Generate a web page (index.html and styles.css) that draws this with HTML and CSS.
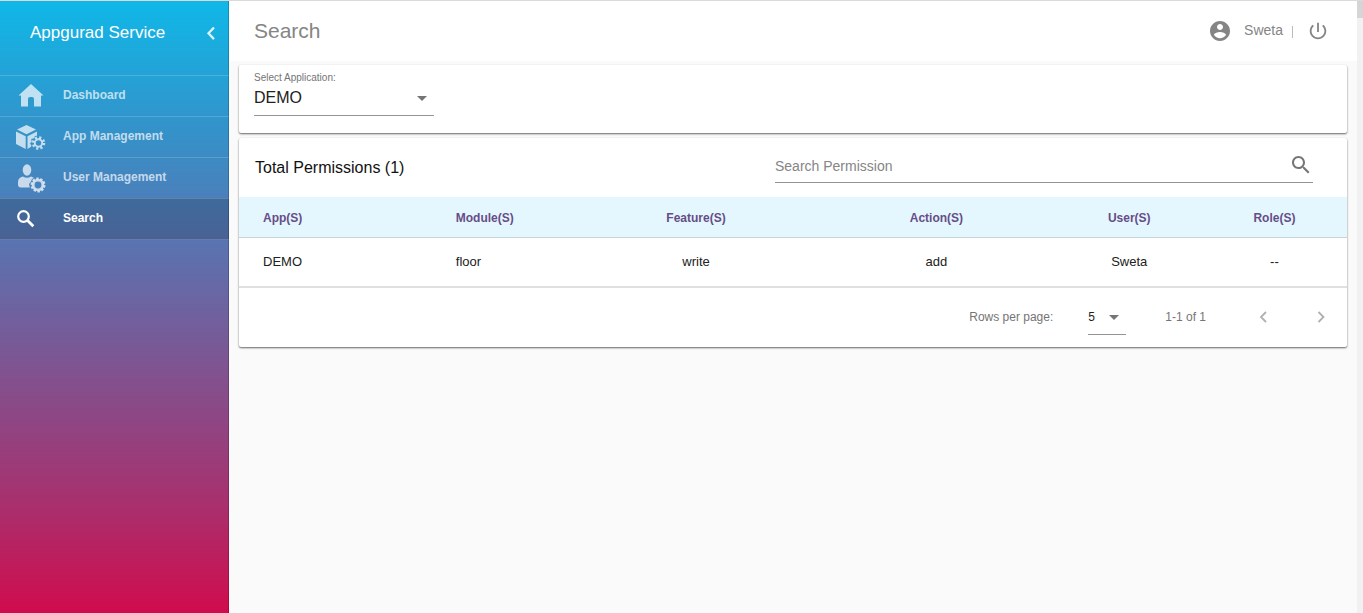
FILE: index.html
```html
<!DOCTYPE html>
<html lang="en">
<head>
<meta charset="utf-8">
<meta name="viewport" content="width=device-width, initial-scale=1">
<title>Appgurad Service - Search</title>
<link rel="stylesheet" href="styles.css">
</head>
<body>
<div class="app">
  <aside class="sidebar">
    <div class="brand">
      <span class="brand-name">Appgurad Service</span>
      <button class="icon-btn collapse" type="button" aria-label="Collapse menu">
        <svg width="10" height="14" viewBox="0 0 10 14"><path d="M8 1.500 2.500 7.300l5.500 5.800" fill="none" stroke="currentColor" stroke-width="2.300"/></svg>
      </button>
    </div>
    <nav class="menu">
      <a class="menu-item" href="#">
        <svg class="menu-icon" viewBox="0 0 32 32"><path d="M16 4 3.500 15.500H6V26.500h7v-7.500q0-2 2-2h2q2 0 2 2v7.500h7V15.500h2.500z" fill="currentColor"/></svg>
        <span class="menu-text">Dashboard</span>
      </a>
      <a class="menu-item" href="#">
        <svg class="menu-icon" viewBox="0 0 32 32">
          <g fill="currentColor">
            <path d="M11.500 4 21 8.500l-9.500 4.800L2 8.500z"/>
            <path d="M1 10.500l9.700 4.800V28L1 23z"/>
            <path d="M12.500 15.300 22 10.500v4.200l-2 .3-1 2.200-2.800.8.500 2.700-1.700 1.800 1.500 2-.5 1.300L12.500 28z"/>
          </g>
          <circle cx="23.500" cy="22" r="3.700" fill="none" stroke="currentColor" stroke-width="2"/>
          <circle cx="23.500" cy="22" r="5.600" fill="none" stroke="currentColor" stroke-width="2.400" stroke-dasharray="2.200 2.200"/>
        </svg>
        <span class="menu-text">App Management</span>
      </a>
      <a class="menu-item" href="#">
        <svg class="menu-icon" viewBox="0 0 32 32">
          <ellipse cx="12" cy="8" rx="4.300" ry="5.700" fill="currentColor"/>
          <path d="M3 22.500v-2.500q0-4.500 5-5.500 4 2.500 8 0 2 .5 3 1.500l-2 1-1.300 3-1.700 2 .8 3.500H6q-3 0-3-3z" fill="currentColor"/>
          <circle cx="23" cy="23" r="4.800" fill="none" stroke="currentColor" stroke-width="2.800"/>
          <circle cx="23" cy="23" r="6.600" fill="none" stroke="currentColor" stroke-width="1.800" stroke-dasharray="2.600 1.550"/>
        </svg>
        <span class="menu-text">User Management</span>
      </a>
      <a class="menu-item active" href="#" aria-current="page">
        <svg class="menu-icon" viewBox="0 0 32 32"><circle cx="8.500" cy="13.500" r="5.300" fill="none" stroke="currentColor" stroke-width="2.200"/><path d="m12.300 17.300 6 6" stroke="currentColor" stroke-width="2.800"/></svg>
        <span class="menu-text">Search</span>
      </a>
    </nav>
  </aside>

  <div class="page">
    <header class="topbar">
      <h1 class="title">Search</h1>
      <div class="account">
        <svg width="24" height="24" viewBox="0 0 24 24"><path fill="currentColor" d="M12 2C6.480 2 2 6.480 2 12s4.480 10 10 10 10-4.480 10-10S17.520 2 12 2zm0 3c1.660 0 3 1.340 3 3s-1.340 3-3 3-3-1.340-3-3 1.340-3 3-3zm0 14.200c-2.500 0-4.710-1.280-6-3.220.03-1.990 4-3.080 6-3.080 1.990 0 5.970 1.090 6 3.080-1.290 1.940-3.500 3.220-6 3.220z"/></svg>
        <span class="user">Sweta</span>
        <span class="divider"></span>
        <button class="icon-btn" type="button" aria-label="Log out">
          <svg width="22" height="22" viewBox="0 0 24 24"><path fill="currentColor" d="M13 3h-2v10h2V3zm4.830 2.170-1.420 1.420C17.990 7.860 19 9.810 19 12c0 3.870-3.130 7-7 7s-7-3.130-7-7c0-2.190 1.010-4.140 2.580-5.420L6.170 5.170C4.230 6.820 3 9.260 3 12c0 4.970 4.030 9 9 9s9-4.030 9-9c0-2.740-1.230-5.180-3.170-6.830z"/></svg>
        </button>
      </div>
    </header>

    <main class="content">
      <section class="card filter">
        <label class="filter-label" for="application">Select Application:</label>
        <div class="select-wrap">
          <select id="application" class="select"><option>DEMO</option></select>
          <svg class="caret" viewBox="0 0 10 5"><path d="M0 0h10L5 5z" fill="currentColor"/></svg>
        </div>
      </section>

      <section class="card">
        <div class="toolbar">
          <h2 class="subtitle">Total Permissions (1)</h2>
          <div class="search-field">
            <input class="search-input" type="text" placeholder="Search Permission" aria-label="Search Permission">
            <button class="icon-btn" type="button" aria-label="Search">
              <svg width="24" height="24" viewBox="0 0 24 24"><path fill="currentColor" d="M15.500 14h-.79l-.28-.27C15.410 12.590 16 11.110 16 9.500 16 5.910 13.090 3 9.500 3S3 5.910 3 9.500 5.910 16 9.500 16c1.610 0 3.090-.59 4.230-1.570l.27.28v.79l5 4.990L20.490 19l-4.990-5zm-6 0C7.010 14 5 11.990 5 9.500S7.010 5 9.500 5 14 7.010 14 9.500 11.990 14 9.500 14z"/></svg>
            </button>
          </div>
        </div>
        <table class="grid">
          <colgroup><col class="c-app"><col class="c-module"><col class="c-wide"><col class="c-wide"><col class="c-narrow"><col class="c-narrow"></colgroup>
          <thead>
            <tr><th>App(S)</th><th>Module(S)</th><th>Feature(S)</th><th>Action(S)</th><th>User(S)</th><th>Role(S)</th></tr>
          </thead>
          <tbody>
            <tr><td>DEMO</td><td>floor</td><td>write</td><td>add</td><td>Sweta</td><td>--</td></tr>
          </tbody>
        </table>
        <div class="pager">
          <label for="rows">Rows per page:</label>
          <div class="select-wrap small">
            <select id="rows" class="select"><option>5</option></select>
            <svg class="caret" viewBox="0 0 10 5"><path d="M0 0h10L5 5z" fill="currentColor"/></svg>
          </div>
          <span class="range">1-1 of 1</span>
          <div class="pager-nav">
            <button class="icon-btn" type="button" aria-label="Previous page" disabled><svg width="10" height="14" viewBox="0 0 10 14"><path d="M8 2 3 7l5 5" fill="none" stroke="currentColor" stroke-width="1.800"/></svg></button>
            <button class="icon-btn" type="button" aria-label="Next page" disabled><svg width="10" height="14" viewBox="0 0 10 14"><path d="m2.500 2 5 5-5 5" fill="none" stroke="currentColor" stroke-width="1.800"/></svg></button>
          </div>
        </div>
      </section>
    </main>
  </div>
  <div class="scroll-track"><div class="scroll-thumb"></div></div>
</div>
</body>
</html>
```
FILE: styles.css
```css
* { box-sizing: border-box; }

body {
  margin: 0;
  background: #fafafa;
  color: #212121;
  font-family: "Liberation Sans", Arial, sans-serif;
  font-size: 13px;
}

.app {
  display: flex;
  min-height: 100vh;
  border-top: 1px solid #dadada;
}

.icon-btn {
  display: flex;
  align-items: center;
  justify-content: center;
  padding: 0;
  border: 0;
  background: none;
  color: inherit;
}

/* Sidebar */
.sidebar {
  flex: 0 0 229px;
  background: linear-gradient(#0fb8e8, #3294cb 20%, #5a73b0 40%, #a8306e 82%, #d00c4d);
  box-shadow: inset -1px 0 rgba(0, 0, 0, 0.2);
  color: #fff;
}

.brand {
  display: flex;
  align-items: center;
  justify-content: space-between;
  height: 74px;
  padding: 0 13px 10px 30px;
}

.brand-name { font-size: 17px; }
.collapse { opacity: 0.85; }

.menu-item {
  display: flex;
  align-items: center;
  gap: 16px;
  height: 41px;
  padding-left: 15px;
  border-top: 1px solid rgba(255, 255, 255, 0.16);
  color: rgba(255, 255, 255, 0.7);
  font-size: 12px;
  font-weight: bold;
  text-decoration: none;
}

.menu-item.active {
  background: rgba(0, 0, 0, 0.16);
  border-bottom: 1px solid rgba(255, 255, 255, 0.16);
  height: 42px;
  color: #fff;
}

.menu-icon { width: 32px; height: 32px; }
.menu-text { padding-bottom: 2px; }

/* Page */
.page { flex: 1; min-width: 0; }

.topbar {
  display: flex;
  align-items: center;
  justify-content: space-between;
  height: 60px;
  padding: 0 28px 0 25px;
  background: #fff;
  color: #858585;
}

.title {
  margin: 0;
  font-size: 21px;
  font-weight: normal;
}

.account {
  display: flex;
  align-items: center;
}

.user {
  margin: 0 9px 0 12px;
  padding-bottom: 2px;
  font-size: 14px;
}

.divider {
  width: 1px;
  height: 12px;
  margin: 2px 14px 0 0;
  background: #bbb;
}

.content {
  display: flex;
  flex-direction: column;
  gap: 5px;
  padding: 4px 10px;
}

.card {
  background: #fff;
  border-radius: 2px;
  box-shadow: 0 1px 2px rgba(0, 0, 0, 0.6);
}

.filter { padding: 6px 15px 17px; }

.filter-label {
  display: block;
  height: 13px;
  color: #757575;
  font-size: 10px;
  line-height: 13px;
}

.select-wrap {
  position: relative;
  width: 180px;
  height: 32px;
  border-bottom: 1px solid #949494;
}

.select {
  width: 100%;
  height: 27px;
  padding: 0;
  border: 0;
  appearance: none;
  background: none;
  color: #212121;
  font-family: inherit;
  font-size: 16px;
}

.caret {
  position: absolute;
  top: 12px;
  right: 7px;
  width: 10px;
  height: 5px;
  color: #757575;
  pointer-events: none;
}

.toolbar {
  display: flex;
  align-items: center;
  justify-content: space-between;
  height: 59px;
  padding: 0 34px 0 16px;
}

.subtitle {
  margin: 0;
  color: #111;
  font-size: 16px;
  font-weight: normal;
}

.search-field {
  display: flex;
  align-items: center;
  align-self: flex-start;
  width: 51%;
  max-width: 538px;
  height: 36px;
  margin-top: 9px;
  border-bottom: 1px solid #949494;
  color: #757575;
}

.search-input {
  flex: 1;
  min-width: 0;
  height: 30px;
  padding: 2px 0 0;
  border: 0;
  outline: 0;
  background: none;
  font-family: inherit;
  font-size: 14px;
}

.search-input::placeholder { color: #858585; }

/* Permissions table */
.grid {
  width: 100%;
  table-layout: fixed;
  border-collapse: separate;
  border-spacing: 0;
}

.c-app { width: 17.4%; }
.c-module { width: 13%; }
.c-wide { width: 21.7%; }
.c-narrow { width: 13.1%; }

.grid th, .grid td { text-align: center; }

.grid th:nth-child(-n+2), .grid td:nth-child(-n+2) {
  padding-left: 24px;
  text-align: left;
}

.grid th {
  height: 41px;
  padding: 2px 0 0;
  border-bottom: 1px solid #c5d5db;
  background: #e4f7fe;
  color: #674d87;
  font-size: 12px;
}

.grid td {
  height: 50px;
  padding: 0 0 2px;
  border-bottom: 2px solid #e0e0e0;
}

.pager {
  display: flex;
  align-items: center;
  justify-content: flex-end;
  height: 59px;
  padding: 0 21px 2px 0;
  color: #757575;
  font-size: 12px;
}

.small {
  width: 38px;
  height: 36px;
  margin: 0 39px 0 35px;
}

.small .select { height: 36px; font-size: 12px; }
.small .caret { top: 16px; }

.pager-nav {
  display: flex;
  gap: 48px;
  margin-left: 52px;
  color: #b0b0b0;
}

/* Scroll indicator */
.scroll-track { flex: 0 0 6px; background: #f1f1f1; }
.scroll-thumb { height: 17px; background: #d5d5d5; }
```
